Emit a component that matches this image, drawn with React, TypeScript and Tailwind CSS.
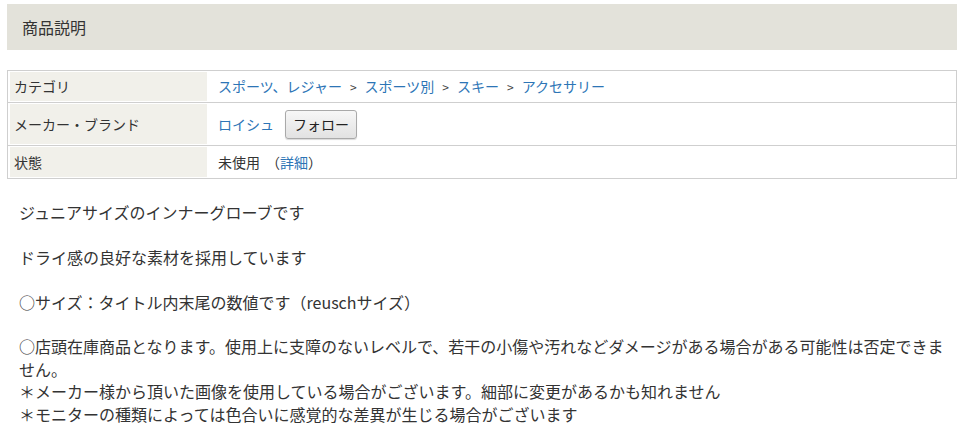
const rows = [
  { label: "カテゴリ", h: "h-[32px]", kind: "category" },
  { label: "メーカー・ブランド", h: "h-[43px]", kind: "brand" },
  { label: "状態", h: "h-[32px]", kind: "state" },
];

const crumbs = ["スポーツ、レジャー", "スポーツ別", "スキー", "アクセサリー"];

function Value({ kind }: { kind: string }) {
  if (kind === "category") {
    return (
      <div className="flex items-center">
        {crumbs.map((c, i) => (
          <span key={c} className="flex items-center">
            {i > 0 && <span className="px-[8px] text-[12px] text-[#444]">&gt;</span>}
            <a className="text-[#2d75b6] cursor-pointer">{c}</a>
          </span>
        ))}
      </div>
    );
  }
  if (kind === "brand") {
    return (
      <div className="flex items-center gap-[11px]">
        <a className="text-[#2d75b6] cursor-pointer">ロイシュ</a>
        <button className="h-[29px] w-[72px] rounded-[3px] border border-[#a9a9a9] bg-gradient-to-b from-[#f7f7f7] to-[#e2e2e2] text-[14px] text-[#222] shadow-[0_1px_1px_rgba(0,0,0,0.15)]">
          フォロー
        </button>
      </div>
    );
  }
  return (
    <div className="flex items-center">
      未使用
      <span className="ml-[6px]">（<a className="text-[#2d75b6] cursor-pointer">詳細</a>）</span>
    </div>
  );
}

export default function App() {
  return (
    <div
      className="min-h-screen bg-white px-[7px] pt-[4px] text-[#333]"
      style={{ fontFamily: '"Noto Sans CJK JP", "Noto Sans", sans-serif' }}
    >
      {/* Heading */}
      <div className="flex h-[46px] w-[950px] items-center bg-[#e3e2da] pl-[15px] text-[16px] leading-none">
        商品説明
      </div>

      {/* Spec table */}
      <div className="mt-[20px] w-[950px] border border-[#cfcfcf] text-[14px]">
        {rows.map((r, i) => (
          <div
            key={r.label}
            className={`flex ${r.h} py-[1px] pl-[2px] ${i < rows.length - 1 ? "border-b border-[#cfcfcf]" : ""}`}
          >
            <div className="flex w-[197px] shrink-0 items-center bg-[#f1f0ea] pl-[4px]">{r.label}</div>
            <div className="flex flex-1 items-center pl-[11px]">
              <Value kind={r.kind} />
            </div>
          </div>
        ))}
      </div>

      {/* Description */}
      <div className="mt-[22px] w-[950px] pl-[12px] text-[16px] leading-[22.4px]">
        ジュニアサイズのインナーグローブです
        <br />
        <br />
        ドライ感の良好な素材を採用しています
        <br />
        <br />
        ○サイズ：タイトル内末尾の数値です（reuschサイズ）
        <br />
        <br />
        ○店頭在庫商品となります。使用上に支障のないレベルで、若干の小傷や汚れなどダメージがある場合がある可能性は否定できません。
        <br />
        ＊メーカー様から頂いた画像を使用している場合がございます。細部に変更があるかも知れません
        <br />
        ＊モニターの種類によっては色合いに感覚的な差異が生じる場合がございます
      </div>
    </div>
  );
}
